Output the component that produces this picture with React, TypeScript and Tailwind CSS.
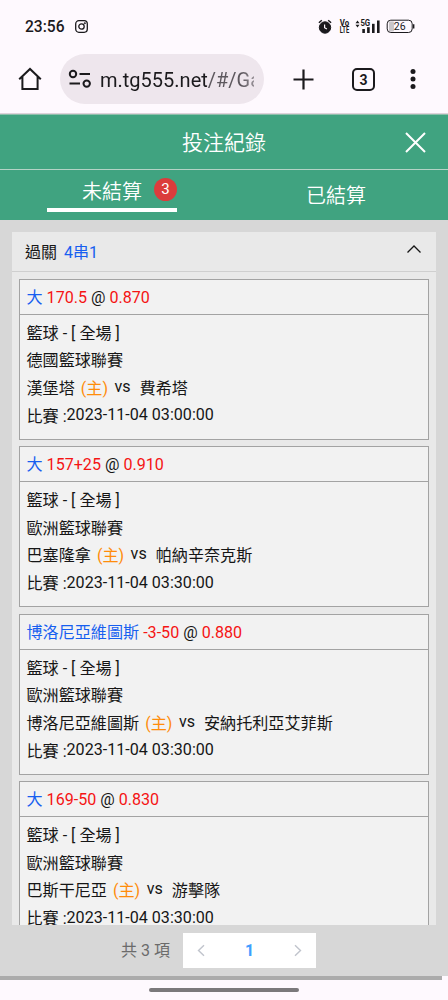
import React from 'react';

interface Bet {
  pick: string;
  line: string;
  odds: string;
  league: string;
  home: string;
  away: string;
  time: string;
}

const bets: Bet[] = [
  { pick: '大', line: '170.5', odds: '0.870', league: '德國籃球聯賽', home: '漢堡塔', away: '費希塔', time: '2023-11-04 03:00:00' },
  { pick: '大', line: '157+25', odds: '0.910', league: '歐洲籃球聯賽', home: '巴塞隆拿', away: '帕納辛奈克斯', time: '2023-11-04 03:30:00' },
  { pick: '博洛尼亞維圖斯', line: '-3-50', odds: '0.880', league: '歐洲籃球聯賽', home: '博洛尼亞維圖斯', away: '安納托利亞艾菲斯', time: '2023-11-04 03:30:00' },
  { pick: '大', line: '169-50', odds: '0.830', league: '歐洲籃球聯賽', home: '巴斯干尼亞', away: '游擊隊', time: '2023-11-04 03:30:00' },
];

const StatusBar = () => (
  <div className="flex h-[52px] items-center justify-between pl-[25px] pr-[33px] text-[#1b1a1d]">
    <div className="flex items-center gap-[11px]">
      <span className="w-[39px] whitespace-nowrap pt-px text-[15.6px] font-medium leading-5">23:56</span>
      <svg width="13" height="13" viewBox="0 0 13 13" fill="none" stroke="currentColor" strokeWidth="1.3">
        <rect x="0.7" y="0.7" width="11.6" height="11.6" rx="3.2" />
        <circle cx="6.5" cy="6.5" r="2.7" />
        <circle cx="9.8" cy="3.2" r="0.4" />
      </svg>
    </div>
    <div className="flex items-center">
      <svg className="-ml-px mr-px" width="14" height="15" viewBox="0 0 14 15" fill="none" stroke="currentColor">
        <circle cx="7" cy="8.5" r="5.7" fill="currentColor" />
        <path d="M0.9 3.8L3.8 1.3M13.1 3.8L10.2 1.3" strokeWidth="1.5" />
        <path d="M6.6 5.5V8.7L8.9 10" stroke="#fef9fe" strokeWidth="1.2" />
      </svg>
      <svg className="ml-[6px]" width="11" height="15" viewBox="0 0 11 15" fill="currentColor" fontWeight="700">
        <text x="0.8" y="6.8" fontSize="8.2" textLength="9.4" lengthAdjust="spacingAndGlyphs">Vo</text>
        <text x="0.8" y="13.9" fontSize="8.2" textLength="9.4" lengthAdjust="spacingAndGlyphs">LTE</text>
      </svg>
      <svg className="ml-[5px]" width="26" height="15" viewBox="0 0 26 15" fill="currentColor">
        <path d="M0.5 4.2L2.5 1.5L4.5 4.2ZM0.5 5.8L2.5 8.5L4.5 5.8Z" />
        <text x="5.4" y="7" fontSize="8.4" fontWeight="700" textLength="9.8" lengthAdjust="spacingAndGlyphs">5G</text>
        <rect x="7.3" y="10" width="2.6" height="4" />
        <rect x="12.1" y="8.2" width="2.6" height="5.8" />
        <rect x="17" y="4.8" width="2.6" height="9.2" />
        <rect x="22" y="1.5" width="2.6" height="12.5" />
      </svg>
      <svg className="ml-[5px]" width="29" height="15" viewBox="0 0 29 15">
        <rect x="3" y="2.6" width="5" height="10" rx="1" fill="#c9c6c9" />
        <rect x="1.2" y="1.2" width="25" height="12.3" rx="3.6" fill="none" stroke="currentColor" strokeWidth="1" />
        <path d="M27.7 5.3V9.5" stroke="currentColor" strokeWidth="1.4" />
        <text x="13.7" y="11.2" textAnchor="middle" fontSize="10.5" fill="currentColor">26</text>
      </svg>
    </div>
  </div>
);

const BrowserBar = () => (
  <div className="flex h-[62px] items-start border-b border-[#ded2da] pl-[18px] pt-[2px] text-[#1b1a1d]">
    <svg className="mt-[13px]" width="24" height="24" viewBox="0 0 24 24" fill="none" stroke="currentColor" strokeWidth="2">
      <path d="M1.2 12.3L12 2L22.8 12.3M4.4 9.6V22.1H19.6V9.6" />
    </svg>
    <div className="ml-[18px] flex h-[50px] w-[204px] items-center rounded-full bg-[#eee6ed] pl-[8px]">
      <svg width="24" height="20" viewBox="0 0 24 20" fill="none" stroke="currentColor" strokeWidth="2">
        <circle cx="5" cy="5" r="3.2" />
        <path d="M11.5 5H22M1.5 14.6H12" />
        <circle cx="18.7" cy="14.6" r="3.2" />
      </svg>
      <div className="ml-[8px] w-[154px] overflow-hidden whitespace-nowrap pt-px text-[20px] leading-7 [mask-image:linear-gradient(to_right,black_92%,rgba(0,0,0,0.6))]">
        m.tg555.net<span className="text-[#5d585e]">/#/Ga</span>
      </div>
    </div>
    <svg className="ml-[29px] mt-[15px]" width="21" height="21" viewBox="0 0 21 21" fill="none" stroke="currentColor" strokeWidth="2.2">
      <path d="M10.5 0.5V20.5M0.5 10.5H20.5" />
    </svg>
    <div className="ml-[38px] mt-[14px] flex h-[23px] w-[23px] items-center justify-center rounded-[5px] border-2 border-current text-[14px] font-bold leading-none">
      3
    </div>
    <svg className="ml-[35px] mt-[14px]" width="6" height="22" viewBox="0 0 6 22" fill="currentColor">
      <circle cx="3" cy="3.5" r="2.5" />
      <circle cx="3" cy="11" r="2.5" />
      <circle cx="3" cy="18.5" r="2.5" />
    </svg>
  </div>
);

const Header = () => (
  <div className="bg-[#40a380] text-white">
    <div className="grid h-[55px] grid-cols-[1fr_84px_1fr] items-center border-b border-[#b4d3c6]">
      <span />
      <h1 className="whitespace-nowrap pt-px text-[21px] font-[350] leading-7">投注紀錄</h1>
      <svg className="mr-[22px] justify-self-end" width="21" height="21" viewBox="0 0 21 21" fill="none" stroke="currentColor" strokeWidth="2">
        <path d="M1 1L20 20M20 1L1 20" />
      </svg>
    </div>
    <div className="grid h-[50px] grid-cols-2">
      <button className="ml-[47px] mt-[6px] flex h-[36px] w-[130px] items-start justify-end border-b-4 border-white">
        <span className="mr-[12px] whitespace-nowrap text-[20px] font-[350] leading-8">未結算</span>
        <span className="mt-[2px] flex h-[23px] w-[23px] items-center justify-center rounded-full bg-[#db3c3c] text-[15px] leading-none">3</span>
      </button>
      <button className="flex h-[50px] items-center justify-center pt-[2px] text-[20px] font-[350] leading-8">已結算</button>
    </div>
  </div>
);

const BetCard = ({ bet }: { bet: Bet }) => (
  <div className="mb-[6.5px] h-[161px] shrink-0 border border-[#a3a3a3] bg-[#f2f2f2] text-[16.1px] text-[#161616]">
    <div className="flex h-[35px] items-center gap-1 border-b border-[#a3a3a3] pl-[6.5px] pt-[2px] leading-6">
      <span className="text-[#175ff0]">{bet.pick}</span>
      <span className="text-[#f51414]">{bet.line}</span>
      <span>@</span>
      <span className="text-[#f51414]">{bet.odds}</span>
    </div>
    <div className="flex flex-col pl-[6.5px] pt-[5px] leading-[27.7px]">
      <div>籃球 - [ 全場 ]</div>
      <div>{bet.league}</div>
      <div className="flex">
        <span>{bet.home}</span>
        <span className="ml-[6px] text-[#ff8c0a]">(主)</span>
        <span className="-mt-[2px] ml-[6.5px]">vs</span>
        <span className="ml-[9px]">{bet.away}</span>
      </div>
      <div className="flex">
        <span>比賽 :</span>
        <span className="-mt-[1.5px]">{bet.time}</span>
      </div>
    </div>
  </div>
);

export default function App() {
  return (
    <div className="flex h-[1000px] w-[448px] flex-col overflow-hidden bg-[#fef9fe] font-[Roboto,'Noto_Sans_CJK_TC',sans-serif]">
      <StatusBar />
      <BrowserBar />
      <div className="h-px shrink-0 bg-[#8fbfac]" />
      <Header />
      <main className="flex h-[756px] shrink-0 flex-col bg-[#d7d7d7] px-3 pt-[12px]">
        <section className="h-[693px] shrink-0 overflow-hidden bg-[#e9e9e9]">
          <div className="flex h-[40px] items-center border-b border-[#cfcfcf] pl-[13px] pr-[15px] pt-[2px] text-[16px] text-[#161616]">
            <span>過關</span>
            <span className="ml-[7px] text-[#175ff0]">4串1</span>
            <svg className="mb-[8px] ml-auto" width="14" height="8" viewBox="0 0 14 8" fill="none" stroke="currentColor" strokeWidth="1.3">
              <path d="M0.5 7.5L7 1L13.5 7.5" />
            </svg>
          </div>
          <div className="flex flex-col px-[7px] pt-[6.5px]">
            {bets.map((bet, i) => (
              <BetCard key={i} bet={bet} />
            ))}
          </div>
        </section>
        <div className="flex h-[51px] items-center pl-[109px] text-[16px] text-[#6b6b6b]">
          <span className="w-[62px] whitespace-nowrap pt-px">共 3 項</span>
          <div className="flex h-[35px] w-[133px] items-center justify-between bg-white px-[14px] text-[#c0c4cc]">
            <svg width="9" height="13" viewBox="0 0 9 13" fill="none" stroke="currentColor" strokeWidth="1.4">
              <path d="M7 1.2L1.5 6.5L7 11.8" />
            </svg>
            <span className="pt-px font-bold text-[#409eff]">1</span>
            <svg width="9" height="13" viewBox="0 0 9 13" fill="none" stroke="currentColor" strokeWidth="1.4">
              <path d="M2 1.2L7.5 6.5L2 11.8" />
            </svg>
          </div>
        </div>
      </main>
      <div className="h-[4px] w-[442px] shrink-0 bg-[#ababab]" />
      <div className="flex h-[20px] shrink-0 justify-center pt-[8px]">
        <div className="h-[4px] w-[150px] rounded-full bg-[#7b797b]" />
      </div>
    </div>
  );
}
